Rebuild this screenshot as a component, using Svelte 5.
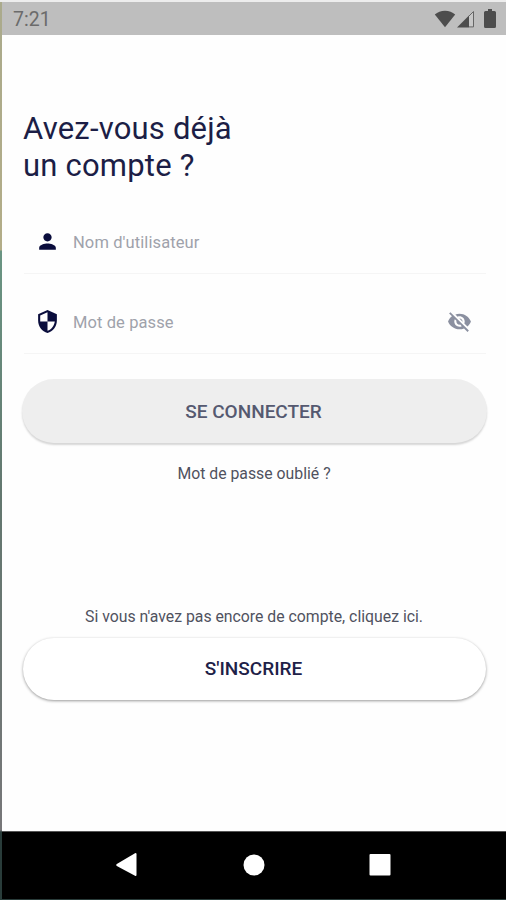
<script lang="ts">
  const time = '7:21';

  const fields = [
    { label: "Nom d'utilisateur", icon: 'person', secret: false },
    { label: 'Mot de passe', icon: 'shield', secret: true }
  ];

  const icons: Record<string, string> = {
    person:
      'M12 12c2.21 0 4-1.79 4-4s-1.79-4-4-4-4 1.79-4 4 1.79 4 4 4zm0 2c-2.67 0-8 1.34-8 4v2h16v-2c0-2.66-5.33-4-8-4z',
    shield:
      'M12 1L3 5v6c0 5.55 3.84 10.74 9 12 5.16-1.26 9-6.45 9-12V5l-9-4zm0 10.99h7c-.53 4.12-3.28 7.79-7 8.94V12H5V6.3l7-3.11v8.8z',
    hidden:
      'M12 7c2.76 0 5 2.24 5 5 0 .65-.13 1.26-.36 1.83l2.92 2.92c1.51-1.26 2.7-2.89 3.43-4.75-1.73-4.39-6-7.5-11-7.5-1.4 0-2.74.25-3.98.7l2.16 2.16C10.74 7.13 11.35 7 12 7zM2 4.27l2.28 2.28.46.46C3.08 8.3 1.78 10.02 1 12c1.73 4.39 6 7.5 11 7.5 1.55 0 3.03-.3 4.38-.84l.42.42L19.73 22 21 20.73 3.27 3 2 4.27zM7.53 9.8l1.55 1.55c-.05.21-.08.43-.08.65 0 1.66 1.34 3 3 3 .22 0 .44-.03.65-.08l1.55 1.55c-.67.33-1.41.53-2.2.53-2.76 0-5-2.24-5-5 0-.79.2-1.53.53-2.2zm4.31-.78l3.15 3.15.02-.16c0-1.66-1.34-3-3-3l-.17.01z'
  };
</script>

<div class="screen">
  <header class="status-bar">
    <span class="time">{time}</span>
    <div class="status-icons">
      <svg width="22" height="18" viewBox="0 0 22 18">
        <path d="M11 17.2L.8 4.6C3.5 2.2 7 .8 11 .8s7.500 1.400 10.200 3.800z" />
      </svg>
      <svg class="signal" width="18" height="18" viewBox="0 0 18 18">
        <path d="M0 17.500L12 5.500v12z" />
        <path d="M12 6l4.500-4.500v15.400h-4.500" fill="#c8c8c8" stroke="#666" stroke-width="1" />
      </svg>
      <svg class="battery" width="12" height="20" viewBox="0 0 12 20">
        <path d="M4 0h4v2h2.500A1.500 1.500 0 0 1 12 3.500v14a1.500 1.500 0 0 1-1.500 1.500h-9A1.500 1.500 0 0 1 0 17.500v-14A1.500 1.500 0 0 1 1.500 2H4z" />
      </svg>
    </div>
  </header>

  <main class="content">
    <h1 class="title">Avez-vous déjà<br />un compte ?</h1>

    <form class="form">
      {#each fields as field}
        <div class="field">
          <svg class="field-icon" width="25" height="25" viewBox="0 0 24 24">
            <path d={icons[field.icon]} />
          </svg>
          <span class="label">{field.label}</span>
          {#if field.secret}
            <svg class="toggle" width="25" height="25" viewBox="0 0 24 24">
              <path d={icons.hidden} />
            </svg>
          {/if}
        </div>
      {/each}

      <button type="button" class="button login">SE CONNECTER</button>
    </form>

    <p class="forgot">Mot de passe oublié ?</p>
    <p class="hint">Si vous n'avez pas encore de compte, cliquez ici.</p>
    <button type="button" class="button register">S'INSCRIRE</button>
  </main>

  <nav class="nav-bar">
    <svg width="24" height="26" viewBox="0 0 24 26">
      <path d="M1.800 12L20 1.200q1.500-.7 1.500 1v20.600q0 1.700-1.500 1L1.800 14q-1.500-1 0-2z" />
    </svg>
    <svg width="24" height="26" viewBox="0 0 24 26"><circle cx="12" cy="13" r="10.500" /></svg>
    <svg width="24" height="26" viewBox="0 0 24 26">
      <rect x="1.500" y="2" width="21" height="21.500" rx="1" />
    </svg>
  </nav>
</div>

<style>
  :global(body) {
    margin: 0;
  }

  .screen {
    box-sizing: border-box;
    display: flex;
    flex-direction: column;
    width: 506px;
    height: 900px;
    padding: 2px 0 1px 2px;
    overflow: hidden;
    background: linear-gradient(
      #aaaa8c 0,
      #b3ad88 250px,
      #6a9583 251px,
      #63776f 500px,
      #777779 830px,
      #293c3a 832px,
      #293c3a 100%
    );
    font-family: Roboto, sans-serif;
    box-shadow: inset 0 2px #ededed;
  }

  .status-bar {
    box-sizing: border-box;
    display: flex;
    align-items: center;
    justify-content: space-between;
    height: 33px;
    padding: 0 10px 0 11px;
    background: #bebebe;
  }

  .time {
    padding-top: 1px;
    color: #6b6b6b;
    font-size: 19.5px;
  }

  .status-icons {
    display: flex;
    align-items: center;
    fill: #4d4d4d;
  }

  .signal {
    margin-left: 1px;
  }

  .battery {
    margin-left: 9px;
  }

  .content {
    display: flex;
    flex: 1;
    flex-direction: column;
    padding: 75px 20px 0;
    background: #fefefe;
  }

  .title {
    margin: 0 0 0 1px;
    color: #1c1e46;
    font-size: 31px;
    font-weight: 400;
    line-height: 37px;
    letter-spacing: 0.2px;
  }

  .form {
    display: flex;
    flex-direction: column;
    margin-top: 26px;
  }

  .field {
    box-sizing: border-box;
    display: flex;
    align-items: center;
    height: 64px;
    margin: 0 0 16px 2px;
    border-bottom: 1px solid #f5f5f5;
    padding: 1px 14px 0 11px;
  }

  .field-icon {
    margin-bottom: 2px;
    fill: #0a0d3c;
  }

  .label {
    flex: 1;
    margin-left: 13px;
    color: #9fa2ab;
    font-size: 16.5px;
    letter-spacing: 0.1px;
  }

  .toggle {
    margin-bottom: 1px;
    fill: #8b90a0;
  }

  .button {
    height: 64px;
    border: 0;
    border-radius: 32px;
    font-family: inherit;
    font-size: 19px;
    font-weight: 500;
  }

  .login {
    margin: 9px -1px 0 0;
    padding: 0 2px 0 0;
    background: #eeeeee;
    color: #555970;
    box-shadow: 0 2px 2px rgba(0, 0, 0, 0.16);
  }

  .forgot,
  .hint {
    margin: 0;
    color: #50525f;
    font-size: 15.8px;
    line-height: 20px;
    text-align: center;
    white-space: nowrap;
  }

  .forgot {
    margin-top: 21px;
  }

  .hint {
    margin-top: 123px;
  }

  .register {
    height: 62px;
    margin: 11px 0 0 1px;
    padding: 0 2px 1px 0;
    background: #fff;
    color: #1e2148;
    box-shadow: 0 1px 3px rgba(0, 0, 0, 0.4);
  }

  .nav-bar {
    box-sizing: border-box;
    display: flex;
    align-items: center;
    justify-content: space-between;
    height: 68px;
    padding: 0 114px 2px 113px;
    border-top: 1px solid #555;
    background: #000;
    fill: #fff;
  }
</style>
